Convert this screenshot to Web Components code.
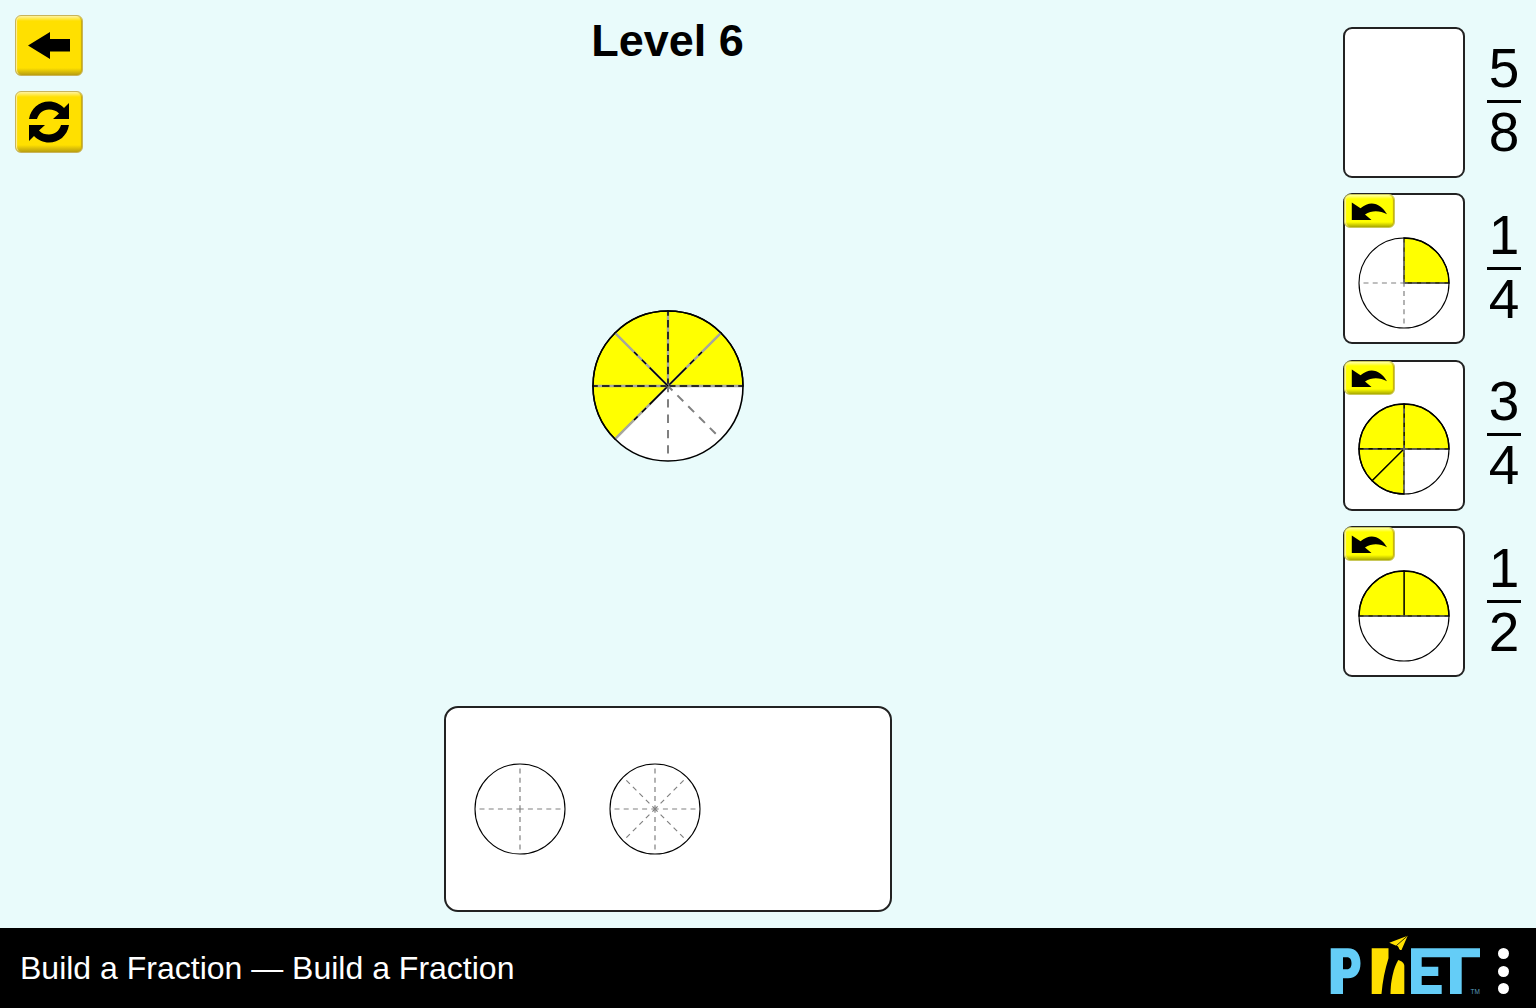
<!DOCTYPE html>
<html lang="en"><head><meta charset="utf-8"><title>Build a Fraction</title>
<style>
html,body{margin:0;padding:0;height:100%;overflow:hidden;background:#e9fbfb;font-family:"Liberation Sans",Arial,sans-serif}
body{display:flex;flex-direction:column;width:1536px;height:1008px}
</style></head><body>
<template id="t-btn"><style>
:host{display:block;box-sizing:border-box;width:68px;height:61px;border-radius:6px;border:1px solid #c9b45a;
background:linear-gradient(#fff3a0 0,#ffe000 5px,#ffe000 calc(100% - 7px),#b89e10 100%);
box-shadow:inset 2px 0 1px -1px #fff0a0,inset -2px 0 1px -1px #c4aa10;}
:host([small]){width:51px;height:34px;background:linear-gradient(#ffffa8 0,#ffff00 4px,#ffff00 calc(100% - 5px),#a8a800 100%);border-color:#c9c85a;border-radius:6px}
.w{display:flex;align-items:center;justify-content:center;width:100%;height:100%}
svg{display:block}
</style><div class="w"><slot></slot></div></template>

<template id="t-card"><style>
:host{display:flex;align-items:center;gap:22px}
.box{box-sizing:border-box;width:122px;height:151px;background:#fff;border:2px solid #222;border-radius:9px;position:relative;display:flex;align-items:flex-end;justify-content:center;padding:0 1px 13px 0}
.undo{position:absolute;left:-1px;top:-1px}
.frac{display:flex;flex-direction:column;align-items:center;width:34px;font-size:55px;line-height:64px;color:#000;padding-bottom:6px}
.frac i{display:block;width:34px;height:3px;background:#000;margin:2px 0 -2px}
.frac span{display:block;height:62px}
.frac #d{margin-top:-1px}
</style><div class="box"><div class="undo"><slot name="undo"></slot></div><slot></slot></div>
<div class="frac"><span id="n"></span><i></i><span id="d"></span></div></template>

<template id="t-foot"><style>
:host{display:flex;align-items:center;justify-content:space-between;height:80px;background:#000;color:#fff;padding:0 27.5px 0 20px;box-sizing:border-box;flex:none}
.t{font-size:32px}
.r{display:flex;align-items:center;gap:15.5px}
.dots{display:flex;flex-direction:column;gap:6.7px;margin-top:6px}
.dots b{display:block;width:11px;height:11px;border-radius:50%;background:#fff}
svg{display:block;margin-top:-6px}
</style><span class="t"><slot></slot></span><div class="r">
<svg width="152" height="60" viewBox="0 0 152 60">
<path fill="#64cdf7" fill-rule="evenodd" d="M.7 13.300H18C26 13.300 30.500 19 30.500 28.300C30.500 37.500 26 43.300 18 43.300H13V59H.7ZM13 22.300V34.300H17C20 34.300 21.500 32 21.500 28.300C21.500 24.600 20 22.300 17 22.300Z"/>
<path fill="#ffe000" d="M41.700 13.300H58.500V23.300C55 34 52.500 47 51.500 59H41.700Z"/>
<path fill="#ffe000" d="M68.300 25C71.500 26 74.300 28 74.300 31V59H60.500C60.500 46 63.500 33 68.300 25Z"/>
<path fill="#ffe000" d="M59.300 7.700L77.700.7L71.500 15L69.500 15L68 11.500Z"/>
<path stroke="#000" stroke-width=".8" fill="none" d="M77.700.7L66.500 10.500L69.500 15"/>
<path fill="#64cdf7" d="M81 13.300H150V22.300H131.700V59H120V22.300H91.700V31.700H108.300V41H91.700V50H111.700V59H81Z"/>
<text x="140.500" y="59" font-size="6.500" fill="#5a9dbd" font-family="Liberation Sans">TM</text>
</svg>
<div class="dots"><b></b><b></b><b></b></div></div></template>

<template id="t-tray"><style>
:host{display:flex;align-items:center;gap:42px;box-sizing:border-box;width:448px;height:206px;padding:0 0 1px 28px;background:#fff;border:2px solid #222;border-radius:14px;flex:none}
</style><slot></slot></template>

<template id="t-stage"><style>
:host{display:grid;grid-template-columns:444px 447px 1fr;height:928px;flex:none;box-sizing:border-box}
.l{padding:15px 0 0 15px;display:flex;flex-direction:column;gap:15px;align-items:flex-start}
.c{display:flex;flex-direction:column;align-items:center}
.c h1{margin:15px 0 0;font-size:45px;line-height:52px;font-weight:700;color:#000}
.c .p{margin-top:242px}
.c .t{margin-top:244px}
.r{padding:26.5px 0 0 452px;display:flex;flex-direction:column;gap:15.5px}
</style>
<div class="l"><slot name="left"></slot></div>
<div class="c"><h1><slot name="title"></slot></h1><div class="p"><slot name="pie"></slot></div><div class="t"><slot name="tray"></slot></div></div>
<div class="r"><slot name="cards"></slot></div></template>

<fraction-stage>
<phet-button slot="left"><svg width="42" height="27" viewBox="0 0 42 27" style="display:block"><path d="M0 13.500L22 0V7H42V19.500H22V27Z" fill="#000"/></svg></phet-button>
<phet-button slot="left" style="height:62px"><svg width="42" height="42" viewBox="0 0 42 42" style="display:block"><path d="M1 18C3 7 11 .5 21 .5C27 .5 32 3 36 7L41 2V18H25L31 12.500C28 9.500 25 8.500 21 8.500C15 8.500 11 12 9 18Z M41 24C39 35 31 41.500 21 41.500C15 41.500 10 39 6 35L1 40V24H17L11 29.500C14 32.500 17 33.500 21 33.500C27 33.500 31 30 33 24Z" fill="#000"/></svg></phet-button>
<span slot="title">Level 6</span>
<fraction-pie slot="pie" r="75" div="8" wedges="0,45;45,90;-45,0;-90,-45;-135,-90"></fraction-pie>
<piece-tray slot="tray"><fraction-pie r="45" div="4"></fraction-pie><fraction-pie r="45" div="8"></fraction-pie></piece-tray>

<target-card slot="cards" n="5" d="8"></target-card>
<target-card slot="cards" n="1" d="4"><phet-button small slot="undo"><undo-icon></undo-icon></phet-button><fraction-pie r="45" div="4" wedges="0,90"></fraction-pie></target-card>
<target-card slot="cards" n="3" d="4"><phet-button small slot="undo"><undo-icon></undo-icon></phet-button><fraction-pie r="45" div="4" wedges="0,90;-90,0;-135,-90;-180,-135"></fraction-pie></target-card>
<target-card slot="cards" n="1" d="2"><phet-button small slot="undo"><undo-icon></undo-icon></phet-button><fraction-pie r="45" div="2" wedges="0,90;-90,0"></fraction-pie></target-card>
</fraction-stage>
<sim-footer>Build a Fraction — Build a Fraction</sim-footer>
<script>
function tpl(id){return document.getElementById(id).content.cloneNode(true)}
class Base extends HTMLElement{constructor(id){super();this.attachShadow({mode:'open'}).appendChild(tpl(id))}}
customElements.define('phet-button',class extends Base{constructor(){super('t-btn')}});
customElements.define('fraction-stage',class extends Base{constructor(){super('t-stage')}});
customElements.define('piece-tray',class extends Base{constructor(){super('t-tray')}});
customElements.define('sim-footer',class extends Base{constructor(){super('t-foot')}});
customElements.define('target-card',class extends Base{constructor(){super('t-card')}
 connectedCallback(){this.shadowRoot.getElementById('n').textContent=this.getAttribute('n');this.shadowRoot.getElementById('d').textContent=this.getAttribute('d')}});
customElements.define('undo-icon',class extends HTMLElement{constructor(){super();this.attachShadow({mode:'open'}).innerHTML='<style>:host{display:block}svg{display:block}</style><svg width="38" height="24" viewBox="0 0 38 24"><path d="M.8 3.500V21H20.500L14 15.500C21 11 29 11.500 36 15.300C30 5 20 .3 9.500 9.300Z" fill="#000"/></svg>'}});
customElements.define('fraction-pie',class extends HTMLElement{constructor(){super();this.attachShadow({mode:'open'})}
 connectedCallback(){
  const r=+this.getAttribute('r'),div=+this.getAttribute('div'),s=r*2+4,c=s/2,k=r/45,big=k>1;
  const pt=(a,l)=>{const t=a*Math.PI/180;return[(c+l*Math.sin(t)).toFixed(2),(c-l*Math.cos(t)).toFixed(2)]};
  const wedges=(this.getAttribute('wedges')||'').split(';').filter(Boolean).map(x=>x.split(',').map(Number));
  const edges=new Set();
  let w='';
  wedges.forEach(([a,b])=>{edges.add((a+360)%360);edges.add((b+360)%360);const p=pt(a,r),q=pt(b,r);
   w+=`<path d="M${c} ${c}L${p[0]} ${p[1]}A${r} ${r} 0 0 1 ${q[0]} ${q[1]}Z" fill="#ff0" stroke="#000" stroke-width="1.300"/>`});
  let g='';
  const angles=div==2?[90,270]:Array.from({length:div},(_,i)=>i*360/div);
  angles.forEach(a=>{
   if(big&&edges.has(a)){
    const o=pt(a,r), diag=a%90!==0;
    g+=`<line x1="${c}" y1="${c}" x2="${o[0]}" y2="${o[1]}" stroke="#a8a8a0" stroke-width="2.400"/>`;
    g+=`<line x1="${c}" y1="${c}" x2="${o[0]}" y2="${o[1]}" stroke="#000" stroke-width="1.500" stroke-dasharray="${diag?'26 5 6 6 5 30':'7.500 4.200'}"/>`;
   }else{
    const e=pt(a,r*.9);
    g+=`<line x1="${e[0]}" y1="${e[1]}" x2="${c}" y2="${c}" stroke="#808080" stroke-width="${big?2:1.200}" stroke-dasharray="${(5*k).toFixed(1)} ${(4.2*k).toFixed(1)}"/>`;
   }});
  this.shadowRoot.innerHTML=`<style>:host{display:block;flex:none}svg{display:block;margin:-.5px}</style><svg width="${s}" height="${s}" viewBox="0 0 ${s} ${s}"><circle cx="${c}" cy="${c}" r="${r}" fill="#fff"/>${w}${g}<circle cx="${c}" cy="${c}" r="${r}" fill="none" stroke="#000" stroke-width="${big?1.600:1.100}"/></svg>`;
 }});
</script>
</body></html>
